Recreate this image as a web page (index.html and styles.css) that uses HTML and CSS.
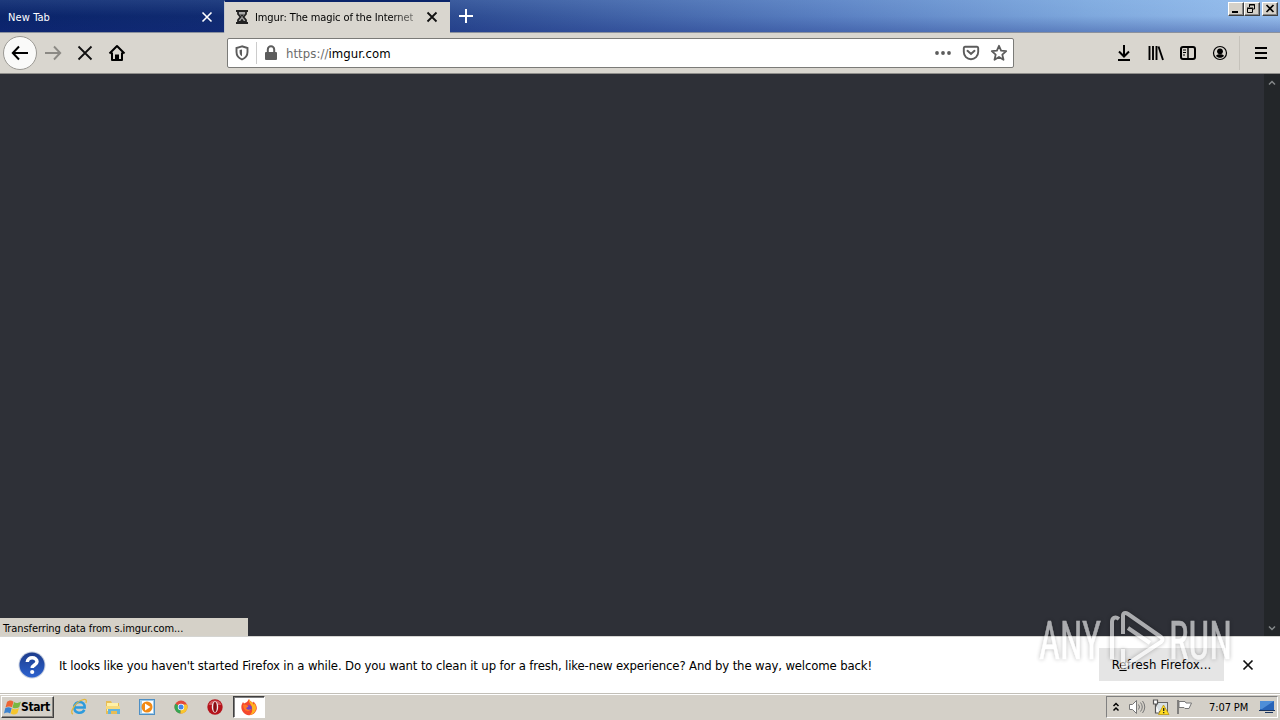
FILE: index.html
```html
<!DOCTYPE html>
<html lang="en">
<head>
<meta charset="utf-8">
<title>Imgur: The magic of the Internet</title>
<link rel="stylesheet" href="styles.css">
</head>
<body>
<div class="screen">
  <header class="titlebar">
    <div class="tab"><span class="tab-label new-label">New Tab</span>
      <svg class="tab-close" width="12" height="12" viewBox="0 0 12 12"><path d="M1.500 1.500l9 9M10.500 1.500l-9 9" stroke="#fff" stroke-width="1.600"/></svg>
    </div>
    <div class="tab active">
      <svg class="hourglass" width="14" height="14" viewBox="0 0 14 14"><path d="M1 1h12M1 13h12" stroke="#222" stroke-width="2"/><path d="M3 2v2l2.500 3L3 10v2h8v-2L8.500 7 11 4V2" fill="#aaa" stroke="#222" stroke-width="1.800"/><path d="M5 4.500h4L7 7zM4.500 12L7 8.500l2.500 3.500z" fill="#222"/></svg>
      <span class="tab-label imgur-label">Imgur: The magic of the Internet</span>
      <svg class="tab-close" width="12" height="12" viewBox="0 0 12 12"><path d="M1.500 1.500l9 9M10.500 1.500l-9 9" stroke="#111" stroke-width="1.800"/></svg>
    </div>
    <svg class="plus" width="14" height="14" viewBox="0 0 14 14"><path d="M7 0v14M0 7h14" stroke="#fff" stroke-width="2"/></svg>
    <div class="window-buttons">
      <span class="wbtn"><svg width="14" height="12" viewBox="0 0 14 12"><path d="M3 9h6" stroke="#000" stroke-width="2"/></svg></span>
      <span class="wbtn"><svg width="14" height="12" viewBox="0 0 14 12"><path d="M4.500 4V1.500h5V6H8M4 2h6M2.500 5.500h5v4h-5zM2 5h6" fill="none" stroke="#000"/></svg></span>
      <span class="wbtn close"><svg width="14" height="12" viewBox="0 0 14 12"><path d="M3.500 2l7 7M10.500 2l-7 7" stroke="#000" stroke-width="1.700"/></svg></span>
    </div>
  </header>

  <nav class="toolbar">
    <span class="back"><svg width="18" height="16" viewBox="0 0 18 16"><path d="M17 8H2M8 1.500L1.800 8 8 14.500" fill="none" stroke="#000" stroke-width="2"/></svg></span>
    <svg class="forward" width="18" height="16" viewBox="0 0 18 16"><path d="M1 8h15M10 1.500L16.200 8 10 14.500" fill="none" stroke="#8b8984" stroke-width="1.900"/></svg>
    <svg class="stop" width="16" height="16" viewBox="0 0 16 16"><path d="M1.500 1.500l13 13M14.500 1.500l-13 13" stroke="#111" stroke-width="1.800"/></svg>
    <svg class="home" width="18" height="18" viewBox="0 0 18 18"><path d="M1.500 9.500L9 2l7.500 7.500M4 8.500V16h10V8.500" fill="none" stroke="#000" stroke-width="2" stroke-linejoin="round"/><path d="M7 16v-5.500h4V16z"/></svg>
    <div class="urlbar">
      <svg class="shield" width="14" height="16" viewBox="0 0 14 16"><path d="M7 1.300L1.500 3v4c0 3.800 2 6 5.500 7.500C10.500 13 12.500 10.800 12.500 7V3z" fill="none" stroke="#5c5c5c" stroke-width="1.900"/><path d="M7 4.500v6.800C5.200 10.200 4.600 9 4.600 7V5z" fill="#5c5c5c"/></svg>
      <i class="url-divider"></i>
      <svg class="lock" width="14" height="16" viewBox="0 0 14 16"><path d="M3.800 8V4.500a3.200 3.200 0 016.400 0V8" fill="none" stroke="#5c5c5c" stroke-width="2"/><rect x="1" y="7" width="12" height="8" rx="1" fill="#5c5c5c"/></svg>
      <span class="url"><span class="scheme">https://</span>imgur.com</span>
      <svg class="dots" width="18" height="4" viewBox="0 0 18 4"><g fill="#5c5c5c"><circle cx="3" cy="2" r="1.900"/><circle cx="9" cy="2" r="1.900"/><circle cx="15" cy="2" r="1.900"/></g></svg>
      <svg class="pocket" width="18" height="16" viewBox="0 0 18 16"><path d="M3 1.800h12a1.300 1.300 0 011.200 1.300V7A7.200 7.200 0 011.800 7V3.100A1.300 1.300 0 013 1.800z" fill="none" stroke="#5c5c5c" stroke-width="1.900"/><path d="M5.500 5.800L9 9l3.500-3.200" fill="none" stroke="#5c5c5c" stroke-width="2" stroke-linecap="round"/></svg>
      <svg class="star" width="18" height="18" viewBox="0 0 18 18"><path d="M9 1.800l2.100 4.800 5.100.5-3.900 3.500 1.200 5.200L9 13l-4.500 2.800 1.200-5.200-3.900-3.500 5.100-.5z" fill="none" stroke="#5c5c5c" stroke-width="1.800" stroke-linejoin="round"/></svg>
    </div>
    <div class="tools">
      <svg width="16" height="18" viewBox="0 0 16 18"><path d="M8 1v11M3 7.500l5 5 5-5M2 16h12" fill="none" stroke="#000" stroke-width="2"/></svg>
      <svg width="16" height="18" viewBox="0 0 16 18"><path d="M1.500 2v14M5 2v14M8.500 2v14M10.500 2.500L15 16" fill="none" stroke="#000" stroke-width="1.900"/></svg>
      <svg width="16" height="18" viewBox="0 0 16 18"><rect x="1" y="3" width="14" height="12" rx="2" fill="none" stroke="#000" stroke-width="2"/><path d="M8 3v12" stroke="#000" stroke-width="1.500"/><path d="M3 6h3M3 8.500h3M3 11h2" stroke="#000"/></svg>
      <svg width="16" height="18" viewBox="0 0 16 18"><circle cx="8" cy="9" r="6.500" fill="none" stroke="#000" stroke-width="1.200"/><circle cx="8" cy="7.300" r="2.900"/><path d="M4 11.700c1-1.200 2.500-1.500 4-1.500s3 .3 4 1.500c-2 2.700-6 2.700-8 0z"/></svg>
    </div>
    <div class="menu"><svg width="12" height="12" viewBox="0 0 12 12"><path d="M0 1h12M0 6h12M0 11h12" stroke="#000" stroke-width="2"/></svg></div>
  </nav>

  <main class="content">
    <div class="status"><span>Transferring data from s.imgur.com...</span></div>
    <div class="scrollbar">
      <span class="arrow"><svg width="8" height="6" viewBox="0 0 8 6"><path d="M1 4.500l3-3 3 3" fill="none" stroke="#85888a" stroke-width="1.500"/></svg></span>
      <span class="arrow"><svg width="8" height="6" viewBox="0 0 8 6"><path d="M1 1.500l3 3 3-3" fill="none" stroke="#85888a" stroke-width="1.500"/></svg></span>
    </div>
  </main>

  <section class="notice">
    <svg class="question" width="28" height="28" viewBox="0 0 28 28"><defs><linearGradient id="qb" x2="0" y2="1"><stop stop-color="#1d3c8c"/><stop offset="1" stop-color="#2c62cf"/></linearGradient></defs><circle cx="14" cy="14" r="13.500" fill="#c6cede"/><circle cx="14" cy="14" r="12.500" fill="url(#qb)"/><path d="M9.300 11c.2-5.800 9.800-5.400 9.700-.2 0 3.200-4.800 3.300-4.800 6.200" fill="none" stroke="#fff" stroke-width="3.500"/><circle cx="14.200" cy="21" r="2.100" fill="#fff"/></svg>
    <span class="message">It looks like you haven't started Firefox in a while. Do you want to clean it up for a fresh, like-new experience? And by the way, welcome back!</span>
    <button class="refresh">R<u>e</u>fresh Firefox...</button>
    <svg class="dismiss" width="12" height="12" viewBox="0 0 12 12"><path d="M1.500 1.500l9 9M10.500 1.500l-9 9" stroke="#111" stroke-width="1.700"/></svg>
  </section>

  <footer class="taskbar">
    <div class="start">
      <svg width="18" height="17" viewBox="0 0 18 17"><path d="M3 3c2-2 4.500-2 6.500-.3L8 8.300c-2-1.300-4.500-1.100-6.500.2z" fill="#ed6534"/><path d="M10 3c2 1.300 4.200 1.200 7-.6L15.300 8c-2.500 1.700-4.700 1.700-6.800.4z" fill="#79b842"/><path d="M1.200 9.200c2-1.300 4.200-1.400 6.500 0L6.200 14.500c-2-1.500-4.200-1.300-6.200 0z" fill="#3c83cf"/><path d="M8.200 9.300c2 1.300 4.200 1.200 6.800-.4l-1.600 5.400c-2.300 1.700-4.700 1.700-6.700.2z" fill="#f5c52d"/></svg>
      <span class="start-label">Start</span>
    </div>
    <div class="launch">
      <span class="app"><svg width="18" height="18" viewBox="0 0 18 18"><path d="M14.300 11.800c-2 4.500-10 4-10-2.300 0-7.500 11-7.500 10.400 0H5" fill="none" stroke="#2d9bdd" stroke-width="2.500"/><path d="M3 16C-1 15 5 4.500 12 2c4-1.400 5 0 4 3" fill="none" stroke="#e2b73c" stroke-width="1.300"/></svg></span>
      <span class="app"><svg width="18" height="18" viewBox="0 0 18 18"><path d="M2 3h5l1 2h7v11H2z" fill="#e7bd55"/><path d="M3 5h11v8H3z" fill="#fff1a7"/><path d="M2 8h14v3H2z" fill="#f6da7d"/><path d="M4 16v-5h12v5h-3v-3H7v3z" fill="#62b4df"/></svg></span>
      <span class="app"><svg width="18" height="18" viewBox="0 0 18 18"><rect x="1.500" y="1.500" width="15" height="15" fill="#9fcbea" stroke="#4e8fc4"/><rect x="4" y="3" width="11" height="12" fill="#fff"/><circle cx="9" cy="9" r="5.500" fill="#f28a15"/><path d="M7 5.500v7L12.500 9z" fill="#fff"/></svg></span>
      <span class="app"><svg width="18" height="18" viewBox="0 0 18 18"><circle cx="9" cy="9" r="6.500" fill="#e34a3c"/><path d="M9 9L3.300 5.800A6.500 6.500 0 008.500 15.500z" fill="#35a653"/><path d="M9 9V6.500h6a6.500 6.500 0 01-6.500 9z" fill="#f9c72d"/><circle cx="9" cy="9" r="3.200" fill="#fff"/><circle cx="9" cy="9" r="2.500" fill="#4386e8"/></svg></span>
      <span class="app"><svg width="18" height="18" viewBox="0 0 18 18"><circle cx="9" cy="9" r="7.700" fill="#b5131b"/><path d="M2.500 7a7 7 0 0113 0z" fill="#d35a5e"/><ellipse cx="9" cy="9" rx="3.200" ry="5.800" fill="#eee"/><ellipse cx="9" cy="9" rx="1.800" ry="5" fill="#8b0d13"/></svg></span>
      <span class="app running"><svg width="18" height="18" viewBox="0 0 18 18"><path d="M2 6l1-2 1 1.500L7 4l2-3c1 3 3 2 4 4l.5-1.500C17 7 18 11 15 14.500a7.500 7.500 0 01-12-.5C1 11 1 8 2 6z" fill="#f5492e"/><path d="M9 1c1 3 4 3 5 6l.5-2C18 11 15 16 9.500 17 12 15 12.500 13 12 10 12 6 8 5 9 1z" fill="#ffb321"/><circle cx="9" cy="10" r="2.800" fill="#7543c3"/><path d="M3 7c2-1 4 0 5.500 1.500L6 10c1 2 3 2 5 1-1 3-7 4-8-4z" fill="#ff7627"/></svg></span>
    </div>
    <div class="tray">
      <svg class="chevrons" width="8" height="11" viewBox="0 0 8 11"><path d="M1.500 4L4 1.500 6.500 4M1.500 8.500L4 6l2.500 2.500" fill="none" stroke="#000" stroke-width="1.500"/></svg>
      <svg class="speaker" width="18" height="16" viewBox="0 0 18 16"><path d="M1.500 5.500h3l4-4v13l-4-4h-3z" fill="#fff" stroke="#777"/><path d="M10.500 5.500q2 2.500 0 5M12.500 3.500q3.500 4.500 0 9M14.500 2q4.500 6 0 12" fill="none" stroke="#777"/></svg>
      <svg class="network" width="18" height="16" viewBox="0 0 18 16"><rect x="4.500" y="3.500" width="11" height="9" fill="#d8e0e3" stroke="#666"/><path d="M1.500 1v4h4V1zM3.500 5v9h4" fill="#fff" stroke="#555" stroke-width="1.200"/><path d="M11.500 6L17 15.500H6.500z" fill="#ffdc21" stroke="#b58d00" stroke-width=".7"/><path d="M11.700 9v3M11.700 13v1.300" stroke="#222" stroke-width="1.300"/></svg>
      <svg class="flag" width="17" height="16" viewBox="0 0 17 16"><path d="M2 1v14" stroke="#666" stroke-width="1.500"/><path d="M3 2.500h6l1 1.500h5.500L13 9.500H9L8 8.500H3z" fill="#fff" stroke="#777"/></svg>
      <span class="clock">7:07 PM</span>
      <svg class="desktop" width="16" height="14" viewBox="0 0 16 14"><path d="M1 1h14v9H1z" fill="#2864b8"/><path d="M1 1h14L3 9H1z" fill="#4e8ed8"/><path d="M0 10.500h16M6 12.500h8" stroke="#19335e"/></svg>
    </div>
  </footer>

  <svg class="watermark" width="214" height="76" viewBox="0 0 214 76">
    <text x="6" y="53" textLength="62" lengthAdjust="spacingAndGlyphs">ANY</text>
    <path d="M86 13c-4-3-7-1-7 3v37M90 28V10c0-3 2-4 5-2l33 23c2 2 2 3 0 5L90 61V43M95 22l22 15"/>
    <text x="136" y="53" textLength="63" lengthAdjust="spacingAndGlyphs">RUN</text>
  </svg>
</div>
</body>
</html>
```
FILE: styles.css
```css
* { box-sizing: border-box; }
body { margin: 0; font-family: "DejaVu Sans Condensed", "DejaVu Sans", sans-serif; font-stretch: condensed; color: #000; }
svg { display: block; flex: none; }
.screen { position: relative; width: 1280px; height: 720px; display: flex; flex-direction: column; overflow: hidden; white-space: nowrap; }

.titlebar { height: 33px; flex: none; display: flex; border-bottom: 1px solid #8b919d; background: linear-gradient(rgba(170,215,255,.12), transparent 50%, rgba(20,40,125,.3)), linear-gradient(90deg, #0a246a, #102b71 17%, #2f4e94 37%, #5a80c2 65%, #7ea8dd 85%, #96bdec); }
.tab { width: 224px; height: 32px; display: flex; align-items: center; padding: 2px 11px 0 8px; color: #fff; font-size: 11px; }
.tab-close { margin-left: auto; }
.tab.active { width: 226px; height: 33px; padding: 0 12px 1px 10px; color: #000; background: #d9d6cf; border-top: 2px solid #0a246a; border-left: 1px solid #c5c8cd; }
.new-label { letter-spacing: .1px; }
.imgur-label { width: 158px; margin-left: 6px; letter-spacing: -.11px; overflow: hidden; -webkit-mask-image: linear-gradient(90deg, #000 86%, rgba(0,0,0,.45)); mask-image: linear-gradient(90deg, #000 86%, rgba(0,0,0,.45)); }
.plus { margin: 9px 0 0 9px; }
.window-buttons { margin: 2px 2px 0 auto; display: flex; }
.wbtn { width: 16px; height: 14px; background: #d5d1c9; border: 1px solid; border-color: #fff #404040 #404040 #fff; box-shadow: inset -1px -1px #888; }
.wbtn.close { margin-left: 2px; }

.toolbar { height: 41px; flex: none; display: flex; align-items: center; background: #d9d6cf; border-bottom: 1px solid #8f8e8b; }
.back { width: 34px; height: 34px; margin-left: 3px; display: flex; align-items: center; justify-content: center; border: 1px solid #9b9994; border-radius: 50%; background: #fafaf9; }
.forward { margin-left: 7px; }
.stop { margin-left: 15px; }
.home { margin-left: 15px; }
.urlbar { width: 787px; height: 30px; margin-left: 101px; padding: 0 5px 0 7px; display: flex; align-items: center; background: #fff; border: 1px solid #7b7b78; border-radius: 2px; }
.url-divider { width: 1px; height: 22px; margin-left: 7px; background: #ccc; }
.lock { margin-left: 7px; }
.url { margin-left: 8px; font-size: 13px; letter-spacing: .06px; }
.scheme { color: #6b6b6b; }
.dots { margin-left: auto; }
.pocket { margin-left: 10px; }
.star { margin-left: 10px; }
.tools { margin-left: 102px; display: flex; gap: 16px; }
.menu { height: 34px; margin-left: 11px; padding-left: 15px; display: flex; align-items: center; border-left: 1px solid #c5c2bb; }

.content { height: 562px; flex: none; display: flex; align-items: flex-end; justify-content: space-between; background: #2e3037; }
.status { width: 248px; height: 18px; padding: 2px 0 0 3px; background: #d5d1c8; font-size: 11px; line-height: 17px; letter-spacing: -.09px; }
.scrollbar { width: 16px; height: 100%; display: flex; flex-direction: column; justify-content: space-between; background: #232629; }
.arrow { height: 17px; display: flex; align-items: center; justify-content: center; }

.notice { height: 57px; flex: none; display: flex; align-items: center; padding-left: 18px; background: #fff; border-top: 1px solid #d5d5d2; }
.message { width: 818px; margin-left: 13px; font-size: 13px; letter-spacing: -.14px; }
.refresh { width: 125px; height: 33px; margin: 0 0 2px 222px; padding: 0; background: #e5e5e5; border: 0; font: inherit; font-size: 13px; letter-spacing: .12px; }
.refresh u { text-underline-offset: 1px; }
.dismiss { margin-left: 18px; }

.taskbar { height: 27px; flex: none; display: flex; align-items: flex-start; padding-top: 2px; background: #d4d0c8; border-top: 1px solid #c2bfb8; box-shadow: inset 0 1px #fff; }
.start { width: 53px; height: 22px; margin-left: 1px; padding-left: 2px; display: flex; align-items: center; border: 1px solid; border-color: #fff #404040 #404040 #fff; box-shadow: inset -1px -1px #87847f; }
.start-label { margin-left: -1px; font-size: 12px; font-weight: bold; letter-spacing: -.4px; }
.launch { display: flex; margin-left: 9px; gap: 2px; }
.app { width: 32px; height: 22px; display: flex; align-items: center; justify-content: center; }
.running { background: #fff; border: 1px solid; border-color: #404040 #fff #fff #404040; box-shadow: inset 1px 1px #808080; }
.tray { width: 172px; height: 22px; margin: 0 2px 0 auto; padding-left: 5px; display: flex; align-items: center; border: 1px solid; border-color: #808080 #fff #fff #808080; }
.speaker { margin-left: 8px; }
.network { margin-left: 6px; }
.flag { margin-left: 6px; }
.clock { width: 42px; margin-left: 16px; font-size: 11px; letter-spacing: -.1px; }
.desktop { margin-left: 8px; }

.watermark { position: absolute; left: 1033px; top: 606px; pointer-events: none; opacity: .6; filter: drop-shadow(0 0 2px rgba(0,0,0,.45)); }
.watermark text { fill: #fff; stroke: #fff; stroke-width: .6; font-family: Roboto, "Liberation Sans", sans-serif; font-size: 53px; }
.watermark path { fill: none; stroke: #fff; stroke-width: 4; stroke-linejoin: round; }
```
